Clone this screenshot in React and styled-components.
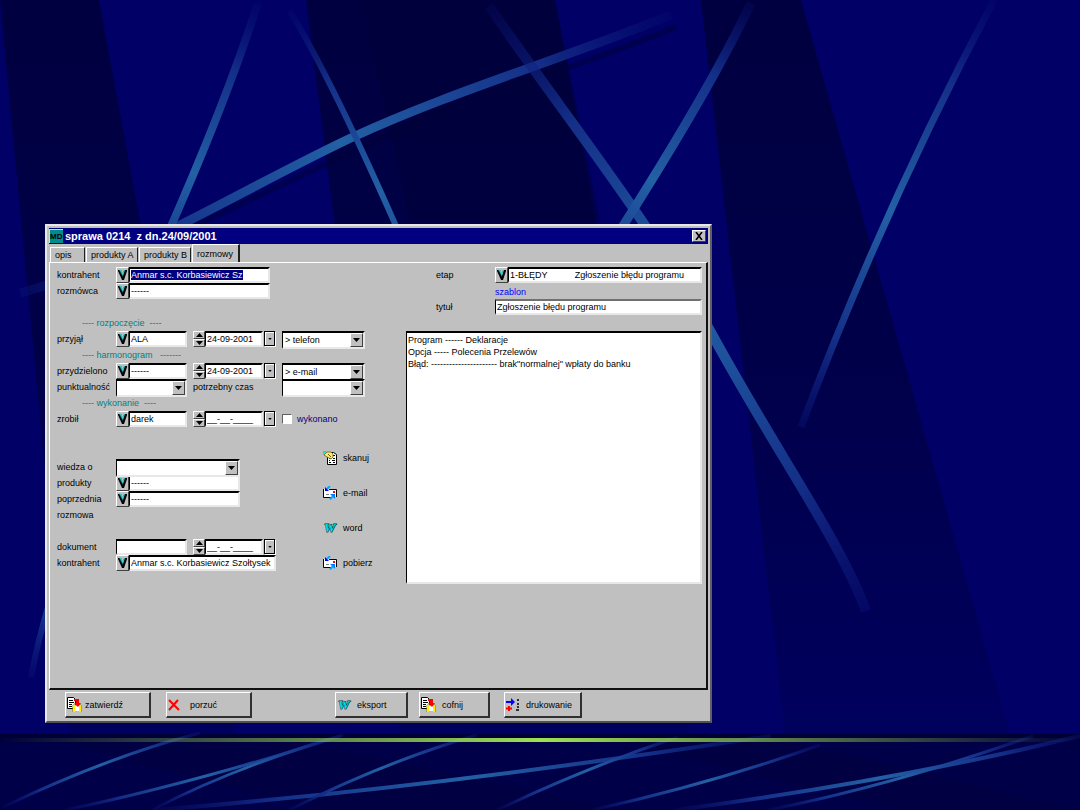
import React, { useEffect, useRef, useState } from 'react'
import styled, { createGlobalStyle, css } from 'styled-components'

const GlobalStyle = createGlobalStyle`
    * { box-sizing: border-box; }

    body {
        margin: 0;
        background: #000066;
        font-family: "Liberation Sans", Arial, sans-serif;
        font-size: 9px;
        line-height: 12px;
        color: #000;
    }

    input, select, textarea, button {
        font: inherit;
        color: inherit;
        border-radius: 0;
    }

    svg { flex: none; }

    ::selection {
        background: #000080;
        color: #fff;
    }
`

/* ---------- backdrop ---------- */

const streaks = [
    { d: 'M671 15 C560 60 450 92 353 137 S110 270 20 293', w: 9, from: [671, 15], to: [20, 293] },
    { d: 'M258 3 Q225 105 165 240', w: 8, from: [258, 3], to: [120, 340] },
    { d: 'M289 10 Q330 75 403 242', w: 6, from: [289, 10], to: [470, 380] },
    { d: 'M489 6 C560 110 650 220 713 336 S840 540 866 611', w: 10, from: [489, 6], to: [866, 611] },
    { d: 'M751 3 Q710 90 614 240', w: 9, from: [751, 3], to: [560, 360] },
    { d: 'M994 0 Q885 205 801 427', w: 7, from: [994, 0], to: [801, 427] },
    { d: 'M50 600 Q38 640 31 677', w: 6, from: [130, 400], to: [31, 677] },
]

const floorStreaks = [
    { d: 'M3 807 Q110 756 200 733', w: 3, from: [3, 807], to: [200, 733] },
    { d: 'M65 810 Q190 784 341 736', w: 3, from: [65, 810], to: [341, 736] },
    { d: 'M152 810 Q232 768 343 735', w: 3, from: [152, 810], to: [343, 735] },
    { d: 'M155 810 Q430 788 771 736', w: 4, from: [155, 810], to: [771, 736] },
    { d: 'M289 810 Q384 762 477 735', w: 3, from: [289, 810], to: [477, 735] },
    { d: 'M497 810 Q590 766 678 737', w: 3, from: [497, 810], to: [678, 737] },
    { d: 'M592 810 Q710 784 820 745', w: 3, from: [592, 810], to: [820, 745] },
    { d: 'M675 810 Q890 782 1080 736', w: 4, from: [675, 810], to: [1080, 736] },
    { d: 'M768 810 Q890 786 1033 736', w: 3, from: [768, 810], to: [1033, 736] },
]

const Sky = styled.svg`
    position: absolute;
    inset: 0;
    width: 100%;
    height: 100%;
`

const Streaks = ({ name, items }) => items.map((s, i) => (
    <g key={name + i} fill="none">
        <linearGradient
            id={name + i}
            gradientUnits="userSpaceOnUse"
            x1={s.from[0]} y1={s.from[1]} x2={s.to[0]} y2={s.to[1]}
        >
            <stop offset="0" stopColor="#0a1478" stopOpacity="0.2" />
            <stop offset="0.2" stopColor="#142f88" />
            <stop offset="0.5" stopColor="#2360a4" />
            <stop offset="0.8" stopColor="#142f88" />
            <stop offset="1" stopColor="#0a1478" stopOpacity="0.4" />
        </linearGradient>
        <path d={s.d} stroke={`url(#${name + i})`} strokeWidth={s.w} />
    </g>
))

const Backdrop = () => (
    <Sky viewBox="0 0 1080 810" preserveAspectRatio="none" aria-hidden="true">
        <linearGradient id="band" x1="0" y1="0" x2="0" y2="1">
            <stop offset="0" stopColor="#000040" />
            <stop offset="0.5" stopColor="#00004a" />
            <stop offset="1" stopColor="#00005e" />
        </linearGradient>
        <rect width="1080" height="810" fill="#000066" />
        <path d="M0 0H99L235 734H70Z" fill="url(#band)" />
        <path d="M306 0H555L690 734H400Z" fill="url(#band)" />
        <path d="M361 0H555L600 222H410Z" fill="#00003a" opacity="0.6" />
        <path d="M701 0H801L1010 734H785Z" fill="url(#band)" />
        <path d="M676 27 C565 72 455 104 358 149 S200 222 150 250" fill="none" stroke="#00003a" strokeWidth="6" opacity="0.5" />
        <Streaks name="ray" items={streaks} />
        <rect y="734" width="1080" height="76" fill="#000048" />
        <path d="M0 734H1080V742H0Z" fill="#000038" />
        <path d="M60 742L320 810H620L300 742ZM620 742L900 810H1080L790 742Z" fill="#000042" />
        <Streaks name="floor" items={floorStreaks} />
    </Sky>
)

const Horizon = styled.hr`
    position: relative;
    width: 100%;
    height: 4px;
    margin: 0;
    border: 0;
    background: linear-gradient(90deg, transparent, #9fe055 50%, transparent);
`

/* ---------- icons ---------- */

const PickIcon = () => (
    <svg width="9" height="10" viewBox="0 0 9 10" aria-hidden="true">
        <path d="M0 0h3l2 4 1-4h3v1L6 10H4L0 1Z" fill="#000" />
        <path d="M1 0h2l2 5v2Z" fill="#008080" />
        <path d="M2 0l3 6 2-6h-1L5 3L3 0Z" fill="#3fd6d6" />
    </svg>
)

const Caret = ({ up, small }) => (
    <svg width={small ? 4 : 7} height={small ? 2 : 4} viewBox="0 0 7 4" aria-hidden="true">
        <path d={up ? 'M0 4L3.500 0L7 4Z' : 'M0 0H7L3.500 4Z'} />
    </svg>
)

const CloseIcon = () => (
    <svg width="8" height="8" viewBox="0 0 8 8" aria-hidden="true">
        <path d="M1 0L7 8M7 0L1 8" stroke="#000" strokeWidth="1.600" />
    </svg>
)

const AppIcon = () => (
    <svg width="14" height="14" viewBox="0 0 14 14" aria-hidden="true">
        <rect width="14" height="14" fill="#9ff0f0" />
        <rect x="1" y="1" width="13" height="13" fill="#008c8c" />
        <text x="1" y="10" fontSize="8" fontWeight="bold" fill="#000">MD</text>
    </svg>
)

const ScanIcon = () => (
    <svg width="14" height="14" viewBox="0 0 14 14" aria-hidden="true">
        <path d="M4.500 1.500h6l3 2v10h-9Z" fill="#fff" stroke="#000" />
        <path d="M6 7.500h2M10 7.500h2M6 9.500h1M9 9.500h3M6 11.500h2M10 11.500h2M10 4.500h2" stroke="#000" />
        <path d="M0 0h4L0 4Z" fill="#00e0e0" />
        <path d="M1 4l3-3h4l2 2v3l-2 2-2-1-2-1Z" fill="#f5ec70" stroke="#66600a" strokeWidth="0.800" />
        <path d="M5 3l3 3" stroke="#66600a" />
    </svg>
)

const MailIcon = () => (
    <svg width="14" height="14" viewBox="0 0 14 14" aria-hidden="true">
        <path d="M1 3h12v8H1Z" fill="#fff" />
        <path d="M.5 3v8.500H8M6 3.500h7.500V11" fill="none" stroke="#000" />
        <path d="M7 0L4 3" stroke="#00aaff" strokeWidth="2" />
        <path d="M2 1v4h4Z" fill="#0000ff" />
        <path d="M10 5h2v2h-2Z" fill="#ff0000" />
        <path d="M3 8.500h3" stroke="#808080" />
        <path d="M7 8h5v5Z" fill="#0078ff" />
        <path d="M10 10l-3 3.500" stroke="#00aaff" strokeWidth="2" />
    </svg>
)

const WordMark = styled.svg`
    overflow: visible;
    font: italic bold 13px/14px "Liberation Serif", serif;
`

const WordIcon = () => (
    <WordMark width="14" height="14" viewBox="0 0 14 14" aria-hidden="true">
        <text x="1" y="11" fill="#00e0e0" stroke="#003c3c" strokeWidth="1.200" paintOrder="stroke">W</text>
    </WordMark>
)

const SaveIcon = () => (
    <svg width="15" height="15" viewBox="0 0 15 15" aria-hidden="true">
        <path d="M.5 .5h6l2 2v9h-8Z" fill="#fff" stroke="#000" />
        <path d="M2 3.500h4M2 5.500h5M2 7.500h3M2 9.500h3" stroke="#000" />
        <path d="M6 8h8v7H6Z" fill="#fff" stroke="#808000" />
        <path d="M6 8h2v7H6ZM12 8h2v7h-2Z" fill="#ffee00" />
        <path d="M7 2h5v4h2l-3 4-4-4h2V4H7Z" fill="#f00" />
    </svg>
)

const CrossIcon = () => (
    <svg width="12" height="12" viewBox="0 0 12 12" aria-hidden="true">
        <path d="M1 1L11 11M10 1L1 11" stroke="#f00" strokeWidth="2" />
    </svg>
)

const PrintIcon = () => (
    <svg width="14" height="14" viewBox="0 0 14 14" aria-hidden="true">
        <path d="M0 3h5V0l4 4-4 4V5H0Z" fill="#0000ff" />
        <path d="M0 10.500h6M3 8v5" stroke="#f00" strokeWidth="2" />
        <path d="M11 2h2M12 5v2M12 8v2M10 12h3" stroke="#000" strokeWidth="1.500" />
    </svg>
)

/* ---------- controls ---------- */

const raised = css`
    border: 1px solid;
    border-color: #fff #404040 #404040 #fff;
    background: #c0c0c0;
`

const sunken = css`
    border: solid;
    border-width: 2px 2px 2px 1px;
    border-color: #000 #e8e8e8 #e8e8e8 #000;
    background: #fff;
`

const Group = styled.div`
    display: flex;
    flex: ${props => props.$width ? 'none' : '1'};
    width: ${props => props.$width ? `${props.$width}px` : 'auto'};
    height: 16px;
    margin-right: ${props => props.$gap || 0}px;
`

const PickButton = styled.button`
    ${raised}
    display: flex;
    flex: none;
    align-items: center;
    justify-content: center;
    width: 13px;
    height: 16px;
    padding: 0;
`

const TextBox = styled.input`
    ${sunken}
    flex: 1;
    width: 100%;
    min-width: 0;
    height: 16px;
    padding: 0 1px;
    outline: none;
    ${props => props.$soft && 'border-top-color: #707070;'}
`

const SpinButtons = styled.div`
    display: grid;
    flex: none;
    width: 12px;
    height: 16px;

    & button {
        ${raised}
        display: flex;
        align-items: center;
        justify-content: center;
        height: 8px;
        padding: 0;
    }
`

const DropButton = styled.button`
    flex: none;
    display: flex;
    align-items: center;
    justify-content: center;
    width: 11px;
    height: 15px;
    margin: 0 1px;
    padding: 0;
    border: 1px solid #000;
    background: #c0c0c0;
    box-shadow: inset 1px 1px #fff, 1px 1px #fff;
`

const ComboBox = styled.div`
    ${sunken}
    display: flex;
    position: relative;
    width: ${props => props.$width}px;
    height: 18px;
    flex: none;

    & select {
        appearance: none;
        width: 100%;
        height: 100%;
        padding: 0 14px 0 2px;
        border: 0;
        outline: none;
        background: transparent;
    }

    & span {
        ${raised}
        display: flex;
        align-items: center;
        justify-content: center;
        position: absolute;
        inset: 0 0 0 auto;
        width: 13px;
        pointer-events: none;
    }
`

const Combo = ({ id, label, width, value = '' }) => (
    <ComboBox $width={width}>
        <select id={id} aria-label={label} defaultValue={value}>
            <option>{value}</option>
        </select>
        <span><Caret /></span>
    </ComboBox>
)

const Picker = ({ id, value, width, gap, inputRef }) => (
    <Group $width={width} $gap={gap}>
        <PickButton type="button" aria-label="wybierz"><PickIcon /></PickButton>
        <TextBox id={id} ref={inputRef} defaultValue={value} />
    </Group>
)

const DateField = ({ label, value }) => (
    <Group $width={83} $gap={6}>
        <SpinButtons>
            <button type="button" aria-label="następny dzień"><Caret up /></button>
            <button type="button" aria-label="poprzedni dzień"><Caret /></button>
        </SpinButtons>
        <TextBox aria-label={label} defaultValue={value} />
        <DropButton type="button" aria-label="kalendarz"><Caret small /></DropButton>
    </Group>
)

/* ---------- window ---------- */

const Page = styled.main`
    position: relative;
    display: flex;
    flex-direction: column;
    min-height: 100vh;
    padding-bottom: 68px;
`

const Desk = styled.div`
    position: relative;
    display: flex;
    flex: 1;
    padding: 224px 368px 15px 45px;
`

const Window = styled.section`
    display: flex;
    flex: 1;
    flex-direction: column;
    min-width: 667px;
    padding: 2px;
    border: solid;
    border-width: 2px;
    border-color: #e8e8e8 #606060 #505050 #e8e8e8;
    background: #c0c0c0;
`

const TitleBar = styled.header`
    display: flex;
    align-items: center;
    gap: 2px;
    height: 16px;
    padding: 0 2px 0 0;
    background: #000080;
    color: #fff;

    & h1 {
        flex: 1;
        margin: 0;
        font-size: 11px;
        line-height: 16px;
        white-space: pre;
    }
`

const CloseButton = styled(PickButton)`
    width: 14px;
    height: 12px;
`

const Tabs = styled.nav`
    display: flex;
    align-items: flex-end;
    gap: 1px;
    height: 18px;
    padding-left: 1px;
`

const Tab = styled.button`
    width: ${props => props.$width}px;
    height: ${props => props.$active ? 18 : 15}px;
    padding: 0 4px;
    border: solid;
    border-width: 1px ${props => props.$active ? 2 : 1}px 0 1px;
    border-color: #fff #202020 #fff #fff;
    background: #c0c0c0;
    text-align: left;
    white-space: nowrap;
`

const Panel = styled.form`
    display: grid;
    flex: 1;
    grid-template-columns: 349px 1fr;
    padding: 4px 4px 0 7px;
    border: solid;
    border-width: 1px 2px 2px 1px;
    border-color: #fff #101010 #101010 #fff;
`

const Row = styled.div`
    display: flex;
    height: 16px;
    margin-bottom: ${props => (props.$after || 0) * 16}px;
`

const Label = styled.label`
    flex: none;
    width: 59px;
    line-height: 16px;
    white-space: nowrap;
`

const Heading = styled.div`
    height: 16px;
    padding-left: 25px;
    color: #008080;
    line-height: 16px;
    white-space: pre;
`

const Check = styled.label`
    display: flex;
    align-items: center;
    gap: 5px;
    color: #000080;

    & input {
        appearance: none;
        width: 10px;
        height: 10px;
        margin: 0;
        border: 1px solid;
        border-color: #606060 #fff #fff #606060;
        background: #fff;
    }

    & input:checked {
        background: #000080;
    }
`

const Lower = styled.div`
    display: flex;
    justify-content: space-between;

    & > div:first-child {
        padding-top: 16px;
    }
`

const Actions = styled.div`
    display: flex;
    flex-direction: column;
    gap: 19px;
    width: 83px;
    padding-top: 7px;

    & button {
        display: flex;
        align-items: center;
        gap: 6px;
        height: 16px;
        padding: 0;
        border: 0;
        background: none;
    }
`

const Details = styled.div`
    display: flex;
    flex-direction: column;
    padding-bottom: 104px;

    & ${Row} {
        padding-left: 30px;
    }

    & a {
        height: 16px;
        padding-left: 89px;
        color: #0000ff;
        line-height: 18px;
        text-decoration: none;
    }
`

const Notes = styled.textarea`
    ${sunken}
    flex: 1;
    width: 100%;
    padding: 1px;
    line-height: 12px;
    outline: none;
    resize: none;
`

const ButtonBar = styled.footer`
    display: flex;
    height: 29px;
    padding: 2px 16px 0;
`

const PushButton = styled.button`
    display: flex;
    align-items: center;
    gap: ${props => props.$gap || 3}px;
    width: ${props => props.$width}px;
    height: 26px;
    margin-right: ${props => props.$after || 0}px;
    padding: 0 1px;
    border: solid;
    border-width: 1px 2px 2px 1px;
    border-color: #fff #303030 #303030 #fff;
    background: #c0c0c0;
`

const tabs = [
    { name: 'opis', width: 35 },
    { name: 'produkty A', width: 52 },
    { name: 'produkty B', width: 52 },
    { name: 'rozmowy', width: 48 },
]

const notes = `Program ------ Deklaracje
Opcja ----- Polecenia Przelewów
Błąd: ---------------------- brak"normalnej" wpłaty do banku`

const App = () => {
    const [tab, setTab] = useState('rozmowy')
    const firstField = useRef(null)

    useEffect(() => {
        firstField.current.focus()
        firstField.current.select()
    }, [])

    return (<>
        <GlobalStyle />
        <Page>
            <Backdrop />
            <Desk>
                <Window>
                    <TitleBar>
                        <AppIcon />
                        <h1>sprawa 0214  z dn.24/09/2001</h1>
                        <CloseButton type="button" aria-label="zamknij"><CloseIcon /></CloseButton>
                    </TitleBar>
                    <Tabs>
                        {tabs.map(t => (
                            <Tab key={t.name} type="button" $width={t.width} $active={t.name === tab} onClick={() => setTab(t.name)}>
                                {t.name}
                            </Tab>
                        ))}
                    </Tabs>
                    <Panel onSubmit={e => e.preventDefault()}>
                        <div>
                            <Row>
                                <Label htmlFor="kontrahent">kontrahent</Label>
                                <Picker id="kontrahent" width={154} value="Anmar s.c. Korbasiewicz Sz" inputRef={firstField} />
                            </Row>
                            <Row $after={1}>
                                <Label htmlFor="rozmowca">rozmówca</Label>
                                <Picker id="rozmowca" width={154} value="------" />
                            </Row>
                            <Heading>{'---- rozpoczęcie  ----'}</Heading>
                            <Row>
                                <Label htmlFor="przyjal">przyjął</Label>
                                <Picker id="przyjal" width={71} gap={6} value="ALA" />
                                <DateField label="data przyjęcia" value="24-09-2001" />
                                <Combo label="sposób przyjęcia" width={83} value="> telefon" />
                            </Row>
                            <Heading>{'---- harmonogram   -------'}</Heading>
                            <Row>
                                <Label htmlFor="przydzielono">przydzielono</Label>
                                <Picker id="przydzielono" width={71} gap={6} value="------" />
                                <DateField label="data przydzielenia" value="24-09-2001" />
                                <Combo label="sposób przydzielenia" width={83} value="> e-mail" />
                            </Row>
                            <Row>
                                <Label htmlFor="punktualnosc">punktualność</Label>
                                <Group $width={71} $gap={6}><Combo id="punktualnosc" width={71} /></Group>
                                <Group $width={83} $gap={6}><Label htmlFor="czas">potrzebny czas</Label></Group>
                                <Combo id="czas" width={83} />
                            </Row>
                            <Heading>{'---- wykonanie  ----'}</Heading>
                            <Row $after={1}>
                                <Label htmlFor="zrobil">zrobił</Label>
                                <Picker id="zrobil" width={71} gap={6} value="darek" />
                                <DateField label="data wykonania" value="__-__-____" />
                                <Check><input type="checkbox" />wykonano</Check>
                            </Row>
                            <Lower>
                                <div>
                                    <Row>
                                        <Label htmlFor="wiedza">wiedza o</Label>
                                        <Combo id="wiedza" width={124} />
                                    </Row>
                                    <Row>
                                        <Label htmlFor="produkty">produkty</Label>
                                        <Picker id="produkty" width={124} value="------" />
                                    </Row>
                                    <Row>
                                        <Label htmlFor="poprzednia">poprzednia</Label>
                                        <Picker id="poprzednia" width={124} value="------" />
                                    </Row>
                                    <Row $after={1}>
                                        <Label htmlFor="poprzednia">rozmowa</Label>
                                    </Row>
                                    <Row>
                                        <Label htmlFor="dokument">dokument</Label>
                                        <Group $width={71} $gap={6}><TextBox id="dokument" /></Group>
                                        <DateField label="data dokumentu" value="__-__-____" />
                                    </Row>
                                    <Row>
                                        <Label htmlFor="kontrahent2">kontrahent</Label>
                                        <Picker id="kontrahent2" width={160} value="Anmar s.c. Korbasiewicz Szołtysek" />
                                    </Row>
                                </div>
                                <Actions>
                                    <button type="button"><ScanIcon />skanuj</button>
                                    <button type="button"><MailIcon />e-mail</button>
                                    <button type="button"><WordIcon />word</button>
                                    <button type="button"><MailIcon />pobierz</button>
                                </Actions>
                            </Lower>
                        </div>
                        <Details>
                            <Row>
                                <Label htmlFor="etap">etap</Label>
                                <Picker id="etap" value={'1-BŁĘDY           Zgłoszenie błędu programu'} />
                            </Row>
                            <a href="#szablon">szablon</a>
                            <Row $after={1}>
                                <Label htmlFor="tytul">tytuł</Label>
                                <TextBox id="tytul" $soft defaultValue="Zgłoszenie błędu programu" />
                            </Row>
                            <Notes aria-label="treść rozmowy" spellCheck={false} defaultValue={notes} />
                        </Details>
                    </Panel>
                    <ButtonBar>
                        <PushButton type="button" $width={86} $after={15}><SaveIcon />zatwierdź</PushButton>
                        <PushButton type="button" $width={86} $after={83} $gap={10}><CrossIcon />porzuć</PushButton>
                        <PushButton type="button" $width={73} $after={11} $gap={6}><WordIcon />eksport</PushButton>
                        <PushButton type="button" $width={71} $after={14} $gap={6}><SaveIcon />cofnij</PushButton>
                        <PushButton type="button" $width={78} $gap={6}><PrintIcon />drukowanie</PushButton>
                    </ButtonBar>
                </Window>
            </Desk>
            <Horizon />
        </Page>
    </>)
}

export default App
